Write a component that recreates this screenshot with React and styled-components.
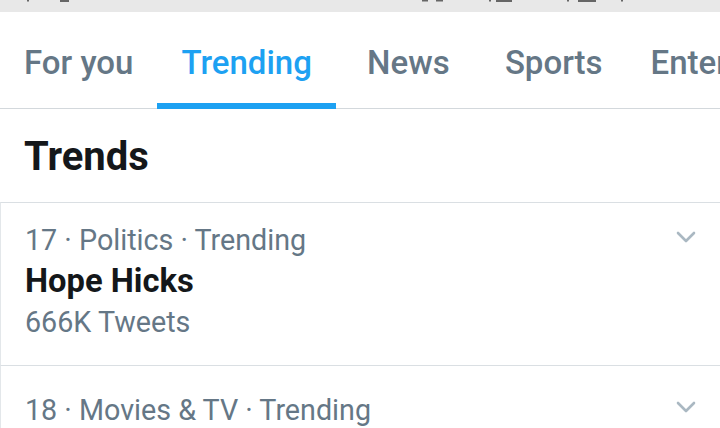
import React from "react";
import styled, { createGlobalStyle } from "styled-components";

const Global = createGlobalStyle`
  html, body {
    margin: 0;
    padding: 0;
    background: #fff;
    font-family: Roboto, "Noto Sans", sans-serif;
    overflow: hidden;
  }
`;

const Page = styled.div`
  width: 720px;
  height: 428px;
  overflow: hidden;
  background: #fff;
`;

const StatusBar = styled.div`
  height: 12px;
  background: #e8e8e8;
  display: flex;
`;

const TabBar = styled.nav`
  height: 97px;
  display: flex;
  box-shadow: inset 0 -1px 0 #d3d8dc;
  white-space: nowrap;
`;

const Tab = styled.div`
  box-sizing: border-box;
  height: 100%;
  min-width: 145px;
  padding: 33px 24px 0;
  text-align: center;
  font-size: 33px;
  line-height: 36px;
  font-weight: 500;
  color: ${(p) => (p.$active ? "#1da1f2" : "#657786")};
  border-bottom: 6px solid ${(p) => (p.$active ? "#1da1f2" : "transparent")};
  flex-shrink: 0;
`;

const Header = styled.h2`
  margin: 0;
  height: 93px;
  box-sizing: border-box;
  padding: 23px 24px 0;
  font-size: 40px;
  line-height: 50px;
  font-weight: 700;
  color: #14171a;
`;

const Row = styled.div`
  display: flex;
  justify-content: space-between;
  align-items: flex-start;
  padding: ${(p) => p.$top}px 24px 22px;
  border-top: 1px solid #dadfe3;
  border-left: 1px solid #e3e7ea;
`;

const Info = styled.div`
  display: flex;
  flex-direction: column;
`;

const Meta = styled.div`
  font-size: 28.7px;
  line-height: 41px;
  color: #657786;
`;

const Name = styled.div`
  font-size: 32.7px;
  line-height: 41px;
  font-weight: 700;
  color: #14171a;
`;

const Chevron = styled.svg`
  margin-top: 11px;
  flex-shrink: 0;
`;

const Caret = () => (
  <Chevron width="20" height="12" viewBox="0 0 20 12">
    <polyline
      points="2,2 10,10 18,2"
      fill="none"
      stroke="#aab8c2"
      strokeWidth="2.6"
      strokeLinecap="round"
      strokeLinejoin="round"
    />
  </Chevron>
);

const tabs = ["For you", "Trending", "News", "Sports", "Entertainment"];

export default function App() {
  return (
    <Page>
      <Global />
      <StatusBar>
        <svg width="720" height="12" viewBox="0 0 720 12">
          <g fill="#666">
            <rect x="27" y="0" width="2" height="1.5" />
            <rect x="60" y="0" width="9" height="2" />
            <rect x="422" y="0" width="6" height="1.5" />
            <rect x="436" y="0" width="7" height="1.5" />
            <rect x="489" y="0" width="2" height="1.5" />
            <rect x="496" y="0" width="16" height="2" />
            <rect x="567" y="0" width="2" height="1.5" />
            <rect x="578" y="0" width="18" height="2" />
            <rect x="621" y="0" width="2" height="1.5" />
          </g>
        </svg>
      </StatusBar>
      <TabBar>
        {tabs.map((t) => (
          <Tab key={t} $active={t === "Trending"}>
            {t}
          </Tab>
        ))}
      </TabBar>
      <Header>Trends</Header>
      <Row $top={17}>
        <Info>
          <Meta>17 · Politics · Trending</Meta>
          <Name>Hope Hicks</Name>
          <Meta>666K Tweets</Meta>
        </Info>
        <Caret />
      </Row>
      <Row $top={24}>
        <Info>
          <Meta>18 · Movies &amp; TV · Trending</Meta>
        </Info>
        <Caret />
      </Row>
    </Page>
  );
}
